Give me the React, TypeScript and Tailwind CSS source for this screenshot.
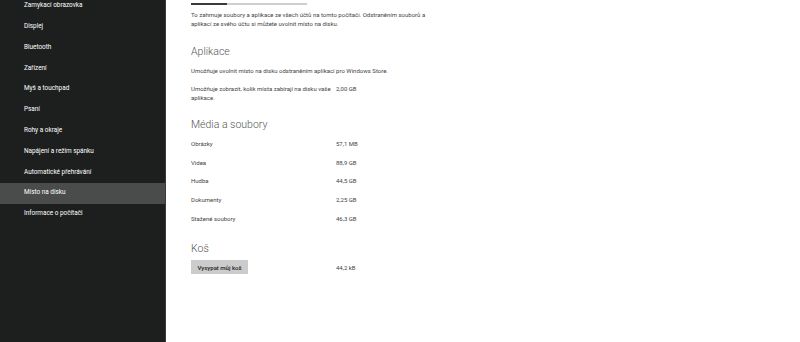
import React from 'react';

const navItems = [
  'Zamykací obrazovka',
  'Displej',
  'Bluetooth',
  'Zařízení',
  'Myš a touchpad',
  'Psaní',
  'Rohy a okraje',
  'Napájení a režim spánku',
  'Automatické přehrávání',
  'Místo na disku',
  'Informace o počítači',
];

const mediaRows = [
  { label: 'Obrázky', value: '57,1 MB' },
  { label: 'Videa', value: '88,9 GB' },
  { label: 'Hudba', value: '44,5 GB' },
  { label: 'Dokumenty', value: '2,25 GB' },
  { label: 'Stažené soubory', value: '46,3 GB' },
];

const Sidebar: React.FC = () => (
  <aside className="w-[166px] h-full bg-[#1d1f1f] border-r border-[#3a3c3c] overflow-hidden shrink-0">
    <ul className="-mt-[4.4px]">
      {navItems.map((item) => (
        <li
          key={item}
          className={`h-[20.8px] flex items-center pl-[24px] text-[6.4px] text-white ${
            item === 'Místo na disku' ? 'bg-[#4a4c4c]' : ''
          }`}
        >
          {item}
        </li>
      ))}
    </ul>
  </aside>
);

const App: React.FC = () => {
  return (
    <div
      className="w-[800px] h-[342px] flex bg-white overflow-hidden"
      style={{ fontFamily: 'Roboto, "Open Sans", sans-serif' }}
    >
      <Sidebar />

      <main className="flex-1 pl-[25px] text-[#444] text-[6px]">
        {/* obsazené místo */}
        <div className="mt-[3px] w-[116px] h-[2px] bg-[#cfcfcf] flex">
          <div className="w-[36px] h-full bg-[#3a3a3a]" />
        </div>

        <p className="mt-[5px] w-[236px] leading-[9px]">
          To zahrnuje soubory a aplikace ze všech účtů na tomto počítači. Odstraněním souborů a aplikací ze svého
          účtu si můžete uvolnit místo na disku.
        </p>

        {/* Aplikace */}
        <h2 className="mt-[16px] text-[10.5px] leading-[16px] font-light text-[#555]">Aplikace</h2>
        <p className="mt-[6px] leading-[9px]">
          Umožňuje uvolnit místo na disku odstraněním aplikací pro Windows Store.
        </p>
        <div className="mt-[9px] flex leading-[9px]">
          <span className="w-[145px] pr-[1px]">Umožňuje zobrazit, kolik místa zabírají na disku vaše aplikace.</span>
          <span>2,00 GB</span>
        </div>

        {/* Média a soubory */}
        <h2 className="mt-[15px] text-[10.5px] leading-[16px] font-light text-[#555]">Média a soubory</h2>
        <div className="mt-[1px] flex flex-col">
          {mediaRows.map((row) => (
            <div key={row.label} className="h-[18.7px] flex items-center">
              <span className="w-[145px]">{row.label}</span>
              <span>{row.value}</span>
            </div>
          ))}
        </div>

        {/* Koš */}
        <h2 className="mt-[14px] text-[10.5px] leading-[16px] font-light text-[#555]">Koš</h2>
        <div className="mt-[3px] flex items-center">
          <div className="w-[145px]">
            <button className="w-[57px] h-[14px] bg-[#cccccc] text-[#222] font-medium text-[6px] flex items-center justify-center">
              Vysypat můj koš
            </button>
          </div>
          <span>44,2 kB</span>
        </div>
      </main>
    </div>
  );
};

export default App;
